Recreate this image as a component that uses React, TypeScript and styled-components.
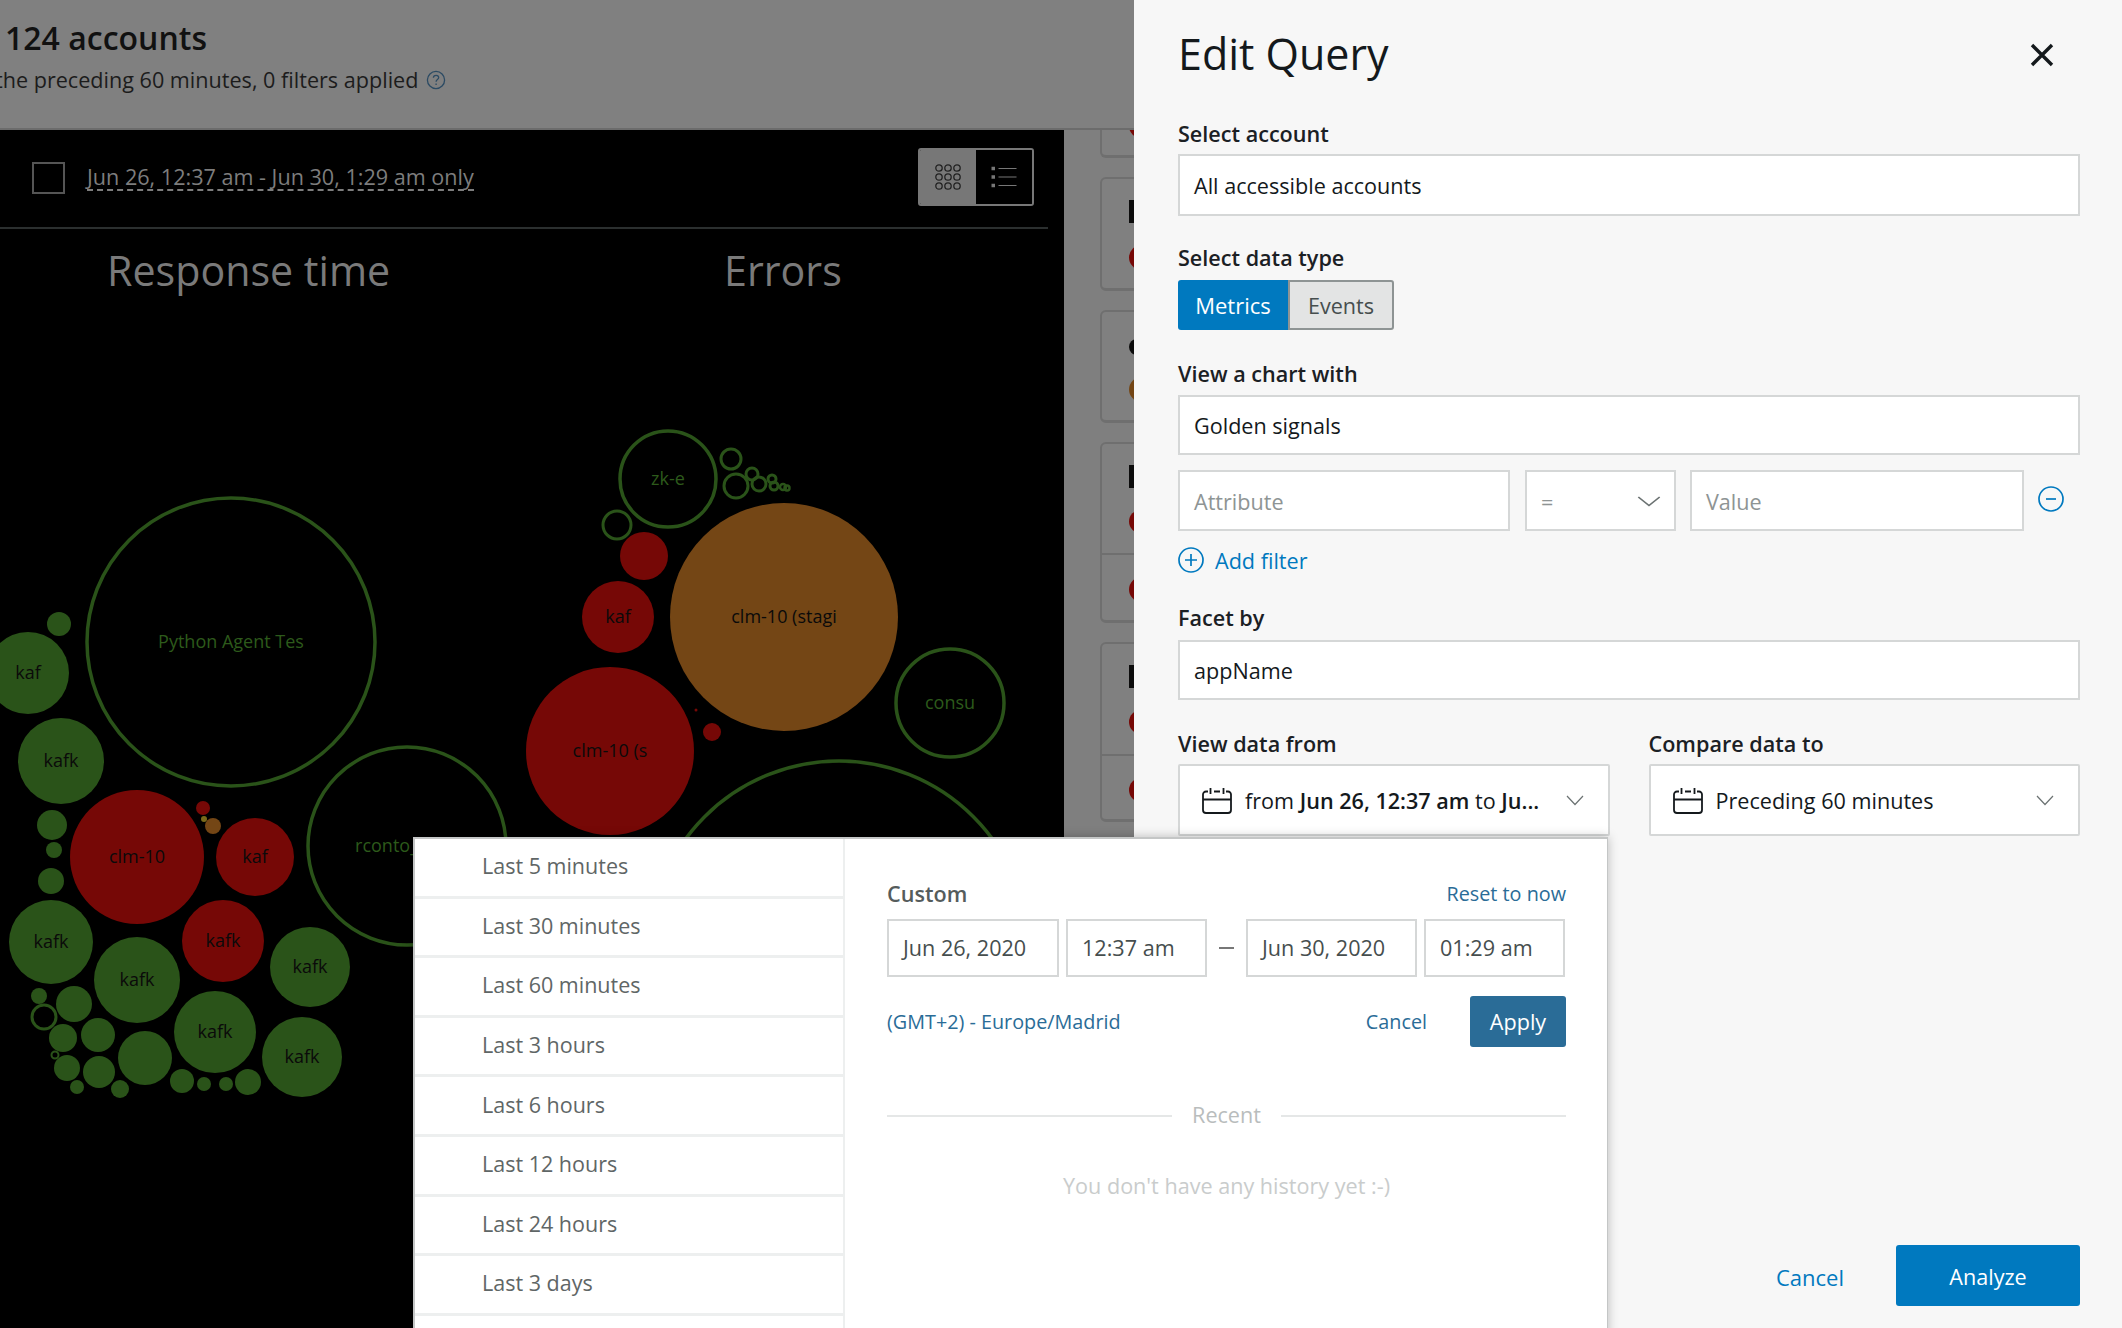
import { createGlobalStyle } from "styled-components";
import styled from "styled-components";

const GlobalStyle = createGlobalStyle`
  html, body {
    margin: 0;
    padding: 0;
    background: #000;
  }
  * {
    box-sizing: border-box;
  }
`;

const Page = styled.div`
  position: relative;
  display: flex;
  width: 2122px;
  height: 1328px;
  overflow: hidden;
  font-family: "Open Sans", "Liberation Sans", sans-serif;
  color: #1b2024;
`;

const Backdrop = styled.div`
  width: 1134px;
  display: flex;
  flex-direction: column;
  overflow: hidden;
  background: #7f7f7f;
`;

const Header = styled.header`
  height: 130px;
  flex-shrink: 0;
  padding: 16px 0 0 5px;
  background: #808080;
  border-bottom: 2px solid #6c6c6c;
`;

const HeaderTitle = styled.h1`
  margin: 0;
  font-size: 32px;
  line-height: 44px;
  font-weight: 600;
  color: #111;
`;

const HeaderSub = styled.div`
  display: flex;
  align-items: center;
  gap: 8px;
  margin: 5px 0 0 -10px;
  font-size: 21.6px;
  line-height: 30px;
  color: #1c1c1c;
  white-space: nowrap;
`;

const Body = styled.div`
  display: flex;
  flex: 1;
  min-height: 0;
`;

const ChartPanel = styled.section`
  width: 1064px;
  background: #000;
  display: flex;
  flex-direction: column;
`;

const ChartToolbar = styled.div`
  height: 99px;
  width: 1048px;
  padding: 18px 14px 0 32px;
  display: flex;
  border-bottom: 2px solid #2b2f2f;
`;

const Checkbox = styled.span`
  width: 33px;
  height: 32px;
  margin-top: 14px;
  border: 2px solid #555;
`;

const RangeText = styled.span`
  margin: 15px 0 0 22px;
  height: 28px;
  font-size: 21.6px;
  line-height: 28px;
  color: #7d7d7d;
  border-bottom: 2px dashed #7d7d7d;
  white-space: nowrap;
`;

const ViewToggle = styled.div`
  margin-left: auto;
  width: 116px;
  height: 58px;
  display: flex;
  border: 2px solid #777;
  border-radius: 3px;
  overflow: hidden;
`;

const ViewOption = styled.span<{ $active?: boolean }>`
  flex: 1;
  display: flex;
  align-items: center;
  justify-content: center;
  background: ${(p) => (p.$active ? "#777" : "#000")};
  color: ${(p) => (p.$active ? "#222" : "#777")};
`;

const ChartTitles = styled.div`
  height: 70px;
  display: flex;
  padding-top: 16px;
`;

const ChartTitle = styled.h2<{ $width: number; $pad: number }>`
  margin: 0;
  width: ${(p) => p.$width}px;
  padding-left: ${(p) => p.$pad}px;
  font-size: 41.2px;
  line-height: 50px;
  font-weight: 400;
  color: #7a7a7a;
  white-space: nowrap;
`;

const BubbleSvg = styled.svg`
  display: block;
  flex-shrink: 0;
  font-family: "Open Sans", sans-serif;
  font-size: 18px;
`;

const CardStrip = styled.aside`
  flex: 1;
  padding-left: 36px;
  display: flex;
  flex-direction: column;
  gap: 19px;
  overflow: hidden;
`;

const Card = styled.div<{ $height: number }>`
  width: 200px;
  height: ${(p) => p.$height}px;
  flex-shrink: 0;
  position: relative;
  border: 2px solid #6f6f6f;
  border-bottom-width: 3px;
  border-radius: 6px;
  background: #808080;
`;

const CardTop = styled(Card)`
  border-top: 0;
  border-radius: 0 0 6px 6px;
`;

const CardDivider = styled.div<{ $top: number }>`
  position: absolute;
  left: 0;
  right: 0;
  top: ${(p) => p.$top}px;
  height: 2px;
  background: #6f6f6f;
`;

const CardMark = styled.span<{ $top: number; $color: string; $size: number; $square?: boolean }>`
  position: absolute;
  left: 27px;
  top: ${(p) => p.$top}px;
  width: ${(p) => p.$size}px;
  height: ${(p) => p.$size}px;
  border-radius: ${(p) => (p.$square ? "0" : "50%")};
  background: ${(p) => p.$color};
`;

const Panel = styled.section`
  width: 988px;
  height: 1328px;
  background: #f7f7f7;
  padding: 32px 42px 22px 44px;
  display: flex;
  flex-direction: column;
`;

const PanelHead = styled.div`
  display: flex;
  align-items: center;
  justify-content: space-between;
  height: 44px;
`;

const PanelTitle = styled.h2`
  margin: 0;
  font-size: 43px;
  line-height: 44px;
  font-weight: 400;
  color: #14191c;
`;

const CloseButton = styled.button`
  border: 0;
  padding: 0;
  background: none;
  margin: 2px 26px 0 0;
  width: 24px;
  height: 24px;
  color: #14191c;
`;

const Label = styled.label<{ $top: number }>`
  display: block;
  margin-top: ${(p) => p.$top}px;
  font-size: 21.6px;
  line-height: 30px;
  font-weight: 600;
  color: #1b2024;
`;

const Input = styled.div<{ $height: number; $top: number; $placeholder?: boolean }>`
  width: 100%;
  height: ${(p) => p.$height}px;
  margin-top: ${(p) => p.$top}px;
  padding: 1px 14px 0;
  display: flex;
  align-items: center;
  background: #fff;
  border: 2px solid #d5d7d7;
  font-size: 21.6px;
  color: ${(p) => (p.$placeholder ? "#8e9494" : "#14191c")};
`;

const Toggle = styled.div`
  display: flex;
  width: 216px;
  height: 50px;
  margin-top: 7px;
`;

const ToggleMetric = styled.span`
  width: 110px;
  display: flex;
  align-items: center;
  justify-content: center;
  background: #0079bf;
  color: #fff;
  font-size: 22px;
  border-radius: 3px 0 0 3px;
`;

const ToggleEvent = styled.span`
  flex: 1;
  display: flex;
  align-items: center;
  justify-content: center;
  background: #e3e4e4;
  color: #464e4e;
  font-size: 21.6px;
  border: 2px solid #8e9494;
  border-radius: 0 3px 3px 0;
`;

const FilterRow = styled.div`
  display: flex;
  align-items: center;
  margin-top: 15px;
`;

const AttrSlot = styled.div<{ $width: number; $gap?: number }>`
  display: flex;
  flex-shrink: 0;
  width: ${(p) => p.$width}px;
  margin-left: ${(p) => p.$gap || 0}px;
`;

const ChevronSlot = styled.span`
  display: flex;
  margin-left: auto;
  margin-right: -1px;
`;

const RoundIcon = styled.span`
  display: flex;
  color: #0079bf;
`;

const RemoveIcon = styled(RoundIcon)`
  margin: -3px 0 0 14px;
`;

const AddFilter = styled.div`
  display: flex;
  align-items: center;
  gap: 11px;
  height: 26px;
  margin-top: 16px;
  font-size: 21.6px;
  color: #0079bf;
`;

const DateRow = styled.div`
  display: flex;
  gap: 39px;
`;

const DateCol = styled.div`
  width: 431.5px;
`;

const PickerField = styled.div`
  height: 72px;
  margin-top: 5px;
  background: #fff;
  border: 2px solid #d5d7d7;
  border-radius: 2px;
  padding: 0 24px 0 22px;
  display: flex;
  align-items: center;
  font-size: 21.6px;
  color: #14191c;
  white-space: nowrap;
`;

const PickerText = styled.span`
  margin-left: 13px;
  flex: 1;
  b {
    font-weight: 600;
  }
`;

const PanelFooter = styled.div`
  margin-top: auto;
  display: flex;
  justify-content: flex-end;
  align-items: center;
  gap: 52px;
`;

const FooterCancel = styled.span`
  padding-top: 2px;
  font-size: 22px;
  color: #0079bf;
`;

const AnalyzeButton = styled.button`
  width: 184px;
  height: 61px;
  padding-top: 2px;
  border: 0;
  border-radius: 3px;
  background: #0079bf;
  color: #fff;
  font: inherit;
  font-size: 21.6px;
`;

const Popup = styled.div`
  position: absolute;
  left: 413px;
  top: 837px;
  width: 1195px;
  height: 500px;
  display: flex;
  background: #fff;
  border: 2px solid #c4c6c6;
  border-bottom: 0;
  border-right-width: 1px;
  box-shadow: 0 0 10px rgba(0, 0, 0, 0.25);
`;

const PresetList = styled.ul`
  list-style: none;
  margin: 0;
  padding: 0;
  width: 430px;
  flex-shrink: 0;
  border-right: 2px solid #edefef;
`;

const PresetItem = styled.li`
  height: 59.6px;
  padding: 0 0 3px 67px;
  display: flex;
  align-items: center;
  font-size: 21.5px;
  color: #5f6666;
  border-bottom: 3px solid #edefef;
`;

const CustomPane = styled.div`
  flex: 1;
  padding: 39px 41px 0 42px;
`;

const CustomHead = styled.div`
  display: flex;
  justify-content: space-between;
  align-items: center;
  height: 30px;
`;

const CustomTitle = styled.span`
  font-size: 21.6px;
  font-weight: 600;
  color: #555c5c;
`;

const LinkText = styled.span`
  font-size: 19.8px;
  color: #2a6c97;
`;

const RangeRow = styled.div`
  display: flex;
  align-items: center;
  gap: 7px;
  margin-top: 11px;
`;

const RangeInput = styled.div<{ $width: number }>`
  width: ${(p) => p.$width}px;
  height: 58px;
  flex-shrink: 0;
  padding: 0 0 1px 14px;
  display: flex;
  align-items: center;
  border: 2px solid #d5d7d7;
  font-size: 21.6px;
  color: #464e4e;
`;

const RangeDash = styled.span`
  width: 15px;
  height: 2px;
  margin: 0 5px 0 5px;
  background: #777;
`;

const ActionRow = styled.div`
  display: flex;
  align-items: center;
  margin-top: 19px;
`;

const CancelLink = styled(LinkText)`
  margin-left: auto;
  margin-right: 43px;
`;

const ApplyButton = styled.button`
  width: 96px;
  height: 51px;
  border: 0;
  border-radius: 3px;
  background: #2a6c97;
  color: #fff;
  font: inherit;
  font-size: 21.6px;
`;

const RecentRow = styled.div`
  display: flex;
  align-items: center;
  gap: 20px;
  margin-top: 53px;
  font-size: 21.6px;
  color: #b9bdbd;
  &::before,
  &::after {
    content: "";
    flex: 1;
    height: 2px;
    margin-top: 3px;
    background: #e5e7e7;
  }
`;

const EmptyText = styled.div`
  margin-top: 42px;
  text-align: center;
  font-size: 21.6px;
  color: #c9cccc;
`;

const GREEN = "#2a5319";
const RED = "#760806";
const ORANGE = "#744615";

type Bubble = {
  x: number;
  y: number;
  r: number;
  fill?: string;
  ring?: number;
  label?: string;
};

const bubbles: Bubble[] = [
  { x: 231, y: 643, r: 144, ring: 3.5, label: "Python Agent Tes" },
  { x: 59, y: 625, r: 12, fill: GREEN },
  { x: 28, y: 674, r: 41, fill: GREEN, label: "kaf" },
  { x: 61, y: 762, r: 43, fill: GREEN, label: "kafk" },
  { x: 407, y: 847, r: 99, ring: 3.5, label: "rconto_agen" },
  { x: 52, y: 826, r: 15, fill: GREEN },
  { x: 54, y: 851, r: 8, fill: GREEN },
  { x: 51, y: 882, r: 13, fill: GREEN },
  { x: 137, y: 858, r: 67, fill: RED, label: "clm-10" },
  { x: 203, y: 809, r: 7, fill: RED },
  { x: 204, y: 820, r: 3, fill: "#7a6a1a" },
  { x: 213, y: 827, r: 8, fill: ORANGE },
  { x: 255, y: 858, r: 39, fill: RED, label: "kaf" },
  { x: 51, y: 943, r: 42, fill: GREEN, label: "kafk" },
  { x: 223, y: 942, r: 41, fill: RED, label: "kafk" },
  { x: 137, y: 981, r: 43, fill: GREEN, label: "kafk" },
  { x: 310, y: 968, r: 40, fill: GREEN, label: "kafk" },
  { x: 215, y: 1033, r: 41, fill: GREEN, label: "kafk" },
  { x: 302, y: 1058, r: 40, fill: GREEN, label: "kafk" },
  { x: 39, y: 997, r: 8, fill: GREEN },
  { x: 74, y: 1005, r: 18, fill: GREEN },
  { x: 44, y: 1018, r: 12, ring: 3 },
  { x: 63, y: 1039, r: 14, fill: GREEN },
  { x: 98, y: 1036, r: 17, fill: GREEN },
  { x: 55, y: 1056, r: 3.5, ring: 2 },
  { x: 67, y: 1069, r: 13, fill: GREEN },
  { x: 99, y: 1073, r: 16, fill: GREEN },
  { x: 77, y: 1088, r: 7, fill: GREEN },
  { x: 120, y: 1090, r: 9, fill: GREEN },
  { x: 145, y: 1059, r: 27, fill: GREEN },
  { x: 182, y: 1082, r: 12, fill: GREEN },
  { x: 204, y: 1085, r: 7, fill: GREEN },
  { x: 226, y: 1085, r: 7, fill: GREEN },
  { x: 248, y: 1083, r: 13, fill: GREEN },
  { x: 668, y: 480, r: 48, ring: 3.5, label: "zk-e" },
  { x: 731, y: 460, r: 10, ring: 3 },
  { x: 736, y: 487, r: 12, ring: 3 },
  { x: 752, y: 475, r: 6, ring: 3 },
  { x: 759, y: 485, r: 7, ring: 3 },
  { x: 772, y: 480, r: 4, ring: 3 },
  { x: 774, y: 487, r: 4, ring: 3 },
  { x: 783, y: 488, r: 3, ring: 2.5 },
  { x: 787, y: 489, r: 2.5, ring: 2.5 },
  { x: 617, y: 526, r: 14, ring: 3 },
  { x: 644, y: 557, r: 24, fill: RED },
  { x: 618, y: 618, r: 36, fill: RED, label: "kaf" },
  { x: 784, y: 618, r: 114, fill: ORANGE, label: "clm-10 (stagi" },
  { x: 610, y: 752, r: 84, fill: RED, label: "clm-10 (s" },
  { x: 696, y: 711, r: 1.5, fill: RED },
  { x: 712, y: 733, r: 9, fill: RED },
  { x: 950, y: 704, r: 54, ring: 3.5, label: "consu" },
  { x: 839, y: 952, r: 190, ring: 3.5 },
];

const presets = [
  "Last 5 minutes",
  "Last 30 minutes",
  "Last 60 minutes",
  "Last 3 hours",
  "Last 6 hours",
  "Last 12 hours",
  "Last 24 hours",
  "Last 3 days",
];

const HelpIcon = () => (
  <svg width="20" height="20" viewBox="0 0 20 20" fill="none" stroke="#2b4a63" strokeWidth="1.3">
    <circle cx="10" cy="10" r="8.6" />
    <path d="M7.4 7.8c0-1.5 1.2-2.5 2.7-2.5s2.6 1 2.6 2.3c0 2-2.6 2-2.6 4.2" />
    <path d="M10.1 13.6v1.3" />
  </svg>
);

const GridIcon = () => (
  <svg width="28" height="28" viewBox="0 0 28 28" fill="none" stroke="currentColor" strokeWidth="1.3">
    {[5, 14, 23].map((y) =>
      [5, 14, 23].map((x) => <circle key={`${x}-${y}`} cx={x} cy={y} r="3.2" />)
    )}
  </svg>
);

const ListIcon = () => (
  <svg width="26" height="22" viewBox="0 0 26 22" fill="none" stroke="currentColor" strokeWidth="1.2">
    <path d="M7.5 2.5h18M7.5 11h18M7.5 19.5h18" />
    <path d="M0.5 2.5h3.5M0.5 11h3.5M0.5 19.5h3.5" strokeWidth="3.5" />
  </svg>
);

const CloseIcon = () => (
  <svg width="24" height="24" viewBox="0 0 24 24" fill="none" stroke="currentColor" strokeWidth="3.4">
    <path d="M2 2l20 20M22 2L2 22" />
  </svg>
);

const CalendarIcon = () => (
  <svg width="30" height="27" viewBox="0 0 30 27" fill="none" stroke="#14191c" strokeWidth="1.8">
    <path d="M6 4.5H4a3 3 0 0 0-3 3V23a3 3 0 0 0 3 3h22a3 3 0 0 0 3-3V7.5a3 3 0 0 0-3-3h-2" />
    <path d="M1 12.5h28M8.5 1v6M21.5 1v6M12 4.5h6" />
  </svg>
);

const Chevron = ({ width = 18 }: { width?: number }) => (
  <svg width={width} height="11" viewBox="0 0 18 11" fill="none" stroke="#6b7272" strokeWidth="1.2" preserveAspectRatio="none">
    <path d="M1 1l8 8.5L17 1" />
  </svg>
);

const CircleSign = ({ plus }: { plus?: boolean }) => (
  <svg width="26" height="26" viewBox="0 0 26 26" fill="none" stroke="currentColor" strokeWidth="1.7">
    <circle cx="13" cy="13" r="12" />
    <path d={plus ? "M7 13h12M13 7v12" : "M8 13h10"} />
  </svg>
);

const App = () => {
  return (
    <Page>
      <GlobalStyle />
      <Backdrop>
        <Header>
          <HeaderTitle>124 accounts</HeaderTitle>
          <HeaderSub>
            the preceding 60 minutes, 0 filters applied
            <HelpIcon />
          </HeaderSub>
        </Header>
        <Body>
          <ChartPanel>
            <ChartToolbar>
              <Checkbox />
              <RangeText>Jun 26, 12:37 am - Jun 30, 1:29 am only</RangeText>
              <ViewToggle>
                <ViewOption $active>
                  <GridIcon />
                </ViewOption>
                <ViewOption>
                  <ListIcon />
                </ViewOption>
              </ViewToggle>
            </ChartToolbar>
            <ChartTitles>
              <ChartTitle $width={724} $pad={107}>Response time</ChartTitle>
              <ChartTitle $width={300} $pad={0}>Errors</ChartTitle>
            </ChartTitles>
            <BubbleSvg width="1064" height="800" viewBox="0 300 1064 800">
              {bubbles.map((b, i) => (
                <g key={i}>
                  <circle
                    cx={b.x}
                    cy={b.y}
                    r={b.r}
                    fill={b.fill || "none"}
                    stroke={b.ring ? GREEN : "none"}
                    strokeWidth={b.ring || 0}
                  />
                  {b.label && (
                    <text x={b.x} y={b.y + 6} textAnchor="middle" fill={b.fill ? "#0a0a0a" : "#2d5a1b"}>
                      {b.label}
                    </text>
                  )}
                </g>
              ))}
            </BubbleSvg>
          </ChartPanel>
          <CardStrip>
            <CardTop $height={28}>
              <CardMark $top={-16} $color={RED} $size={24} />
            </CardTop>
            <Card $height={114}>
              <CardMark $top={21} $color="#0c0c0c" $size={23} $square />
              <CardMark $top={66} $color={RED} $size={25} />
            </Card>
            <Card $height={113}>
              <CardMark $top={27} $color="#0c0c0c" $size={16} />
              <CardMark $top={65} $color={ORANGE} $size={25} />
            </Card>
            <Card $height={181}>
              <CardMark $top={21} $color="#0c0c0c" $size={23} $square />
              <CardMark $top={66} $color={RED} $size={23} />
              <CardDivider $top={109} />
              <CardMark $top={133} $color={RED} $size={25} />
            </Card>
            <Card $height={180}>
              <CardMark $top={21} $color="#0c0c0c" $size={23} $square />
              <CardMark $top={66} $color={RED} $size={24} />
              <CardDivider $top={110} />
              <CardMark $top={134} $color={RED} $size={24} />
            </Card>
          </CardStrip>
        </Body>
      </Backdrop>
      <Panel>
        <PanelHead>
          <PanelTitle>Edit Query</PanelTitle>
          <CloseButton>
            <CloseIcon />
          </CloseButton>
        </PanelHead>
        <Label $top={43}>Select account</Label>
        <Input $height={62} $top={5}>All accessible accounts</Input>
        <Label $top={27}>Select data type</Label>
        <Toggle>
          <ToggleMetric>Metrics</ToggleMetric>
          <ToggleEvent>Events</ToggleEvent>
        </Toggle>
        <Label $top={29}>View a chart with</Label>
        <Input $height={60} $top={6}>Golden signals</Input>
        <FilterRow>
          <AttrSlot $width={332}>
            <Input $height={61} $top={0} $placeholder>Attribute</Input>
          </AttrSlot>
          <AttrSlot $width={151} $gap={15}>
            <Input $height={61} $top={0} $placeholder>
              =
              <ChevronSlot>
                <Chevron width={24} />
              </ChevronSlot>
            </Input>
          </AttrSlot>
          <AttrSlot $width={334} $gap={14}>
            <Input $height={61} $top={0} $placeholder>Value</Input>
          </AttrSlot>
          <RemoveIcon>
            <CircleSign />
          </RemoveIcon>
        </FilterRow>
        <AddFilter>
          <CircleSign plus />
          Add filter
        </AddFilter>
        <Label $top={30}>Facet by</Label>
        <Input $height={60} $top={7}>appName</Input>
        <DateRow>
          <DateCol>
            <Label $top={29}>View data from</Label>
            <PickerField>
              <CalendarIcon />
              <PickerText>
                from <b>Jun 26, 12:37 am</b> to <b>Ju...</b>
              </PickerText>
              <Chevron />
            </PickerField>
          </DateCol>
          <DateCol>
            <Label $top={29}>Compare data to</Label>
            <PickerField>
              <CalendarIcon />
              <PickerText>Preceding 60 minutes</PickerText>
              <Chevron />
            </PickerField>
          </DateCol>
        </DateRow>
        <PanelFooter>
          <FooterCancel>Cancel</FooterCancel>
          <AnalyzeButton>Analyze</AnalyzeButton>
        </PanelFooter>
      </Panel>
      <Popup>
        <PresetList>
          {presets.map((p) => (
            <PresetItem key={p}>{p}</PresetItem>
          ))}
        </PresetList>
        <CustomPane>
          <CustomHead>
            <CustomTitle>Custom</CustomTitle>
            <LinkText>Reset to now</LinkText>
          </CustomHead>
          <RangeRow>
            <RangeInput $width={172}>Jun 26, 2020</RangeInput>
            <RangeInput $width={141}>12:37 am</RangeInput>
            <RangeDash />
            <RangeInput $width={171}>Jun 30, 2020</RangeInput>
            <RangeInput $width={141}>01:29 am</RangeInput>
          </RangeRow>
          <ActionRow>
            <LinkText>(GMT+2) - Europe/Madrid</LinkText>
            <CancelLink>Cancel</CancelLink>
            <ApplyButton>Apply</ApplyButton>
          </ActionRow>
          <RecentRow>Recent</RecentRow>
          <EmptyText>You don't have any history yet :-)</EmptyText>
        </CustomPane>
      </Popup>
    </Page>
  );
};

export default App;
